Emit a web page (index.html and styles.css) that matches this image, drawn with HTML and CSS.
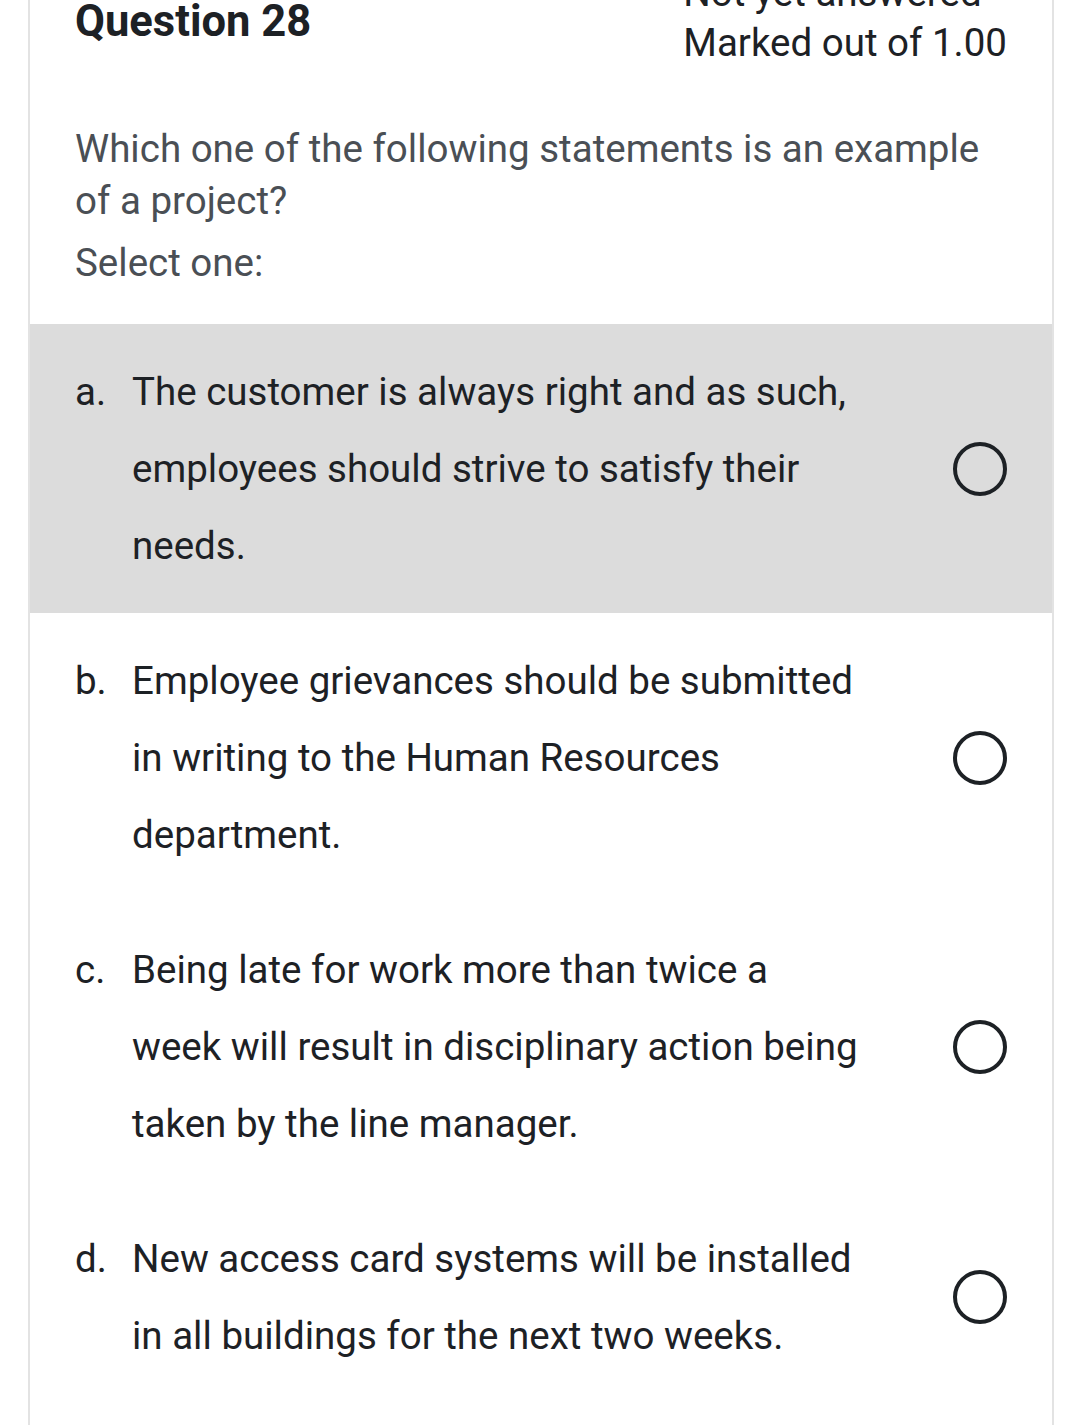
FILE: index.html
```html
<!DOCTYPE html>
<html lang="en">
<head>
<meta charset="utf-8">
<link rel="stylesheet" href="styles.css">
</head>
<body>
<div class="card">
  <div class="header">
    <h3 class="qno">Question 28</h3>
    <div class="state">
      <div>Not yet answered</div>
      <div>Marked out of 1.00</div>
    </div>
  </div>
  <div class="qtext">
    <p>Which one of the following statements is an example of a project?</p>
    <p class="prompt">Select one:</p>
  </div>
  <div class="answers">
    <div class="option hl">
      <span class="label">a.</span>
      <span class="text">The customer is always right and as such, employees should strive to satisfy their needs.</span>
      <span class="radio"></span>
    </div>
    <div class="option">
      <span class="label">b.</span>
      <span class="text">Employee grievances should be submitted in writing to the Human Resources department.</span>
      <span class="radio"></span>
    </div>
    <div class="option">
      <span class="label">c.</span>
      <span class="text">Being late for work more than twice a week will result in disciplinary action being taken by the line manager.</span>
      <span class="radio"></span>
    </div>
    <div class="option">
      <span class="label">d.</span>
      <span class="text">New access card systems will be installed in all buildings for the next two weeks.</span>
      <span class="radio"></span>
    </div>
  </div>
</div>
</body>
</html>
```

FILE: styles.css
```css
* { box-sizing: border-box; }
body {
  margin: 0;
  background: #ffffff;
  font-family: Roboto, "Liberation Sans", sans-serif;
  color: #1d2125;
}
.card {
  margin: -32px 26px 0 28px;
  border-left: 2px solid #e3e3e3;
  border-right: 2px solid #e3e3e3;
  padding-bottom: 60px;
}
.header {
  display: flex;
  justify-content: space-between;
  align-items: flex-start;
  padding: 0 45px;
}
.qno {
  margin: 0;
  padding-top: 30px;
  font-size: 43.5px;
  line-height: 48px;
  font-weight: 700;
}
.state {
  font-size: 38.5px;
  line-height: 50px;
}
.qtext {
  padding: 55px 45px 35px;
  color: #4a4f55;
  font-size: 38.5px;
}
.qtext p {
  margin: 0;
  line-height: 52px;
}
.qtext .prompt {
  margin-top: 10px;
}
.option {
  display: flex;
  align-items: center;
  padding: 29px 45px;
  font-size: 38.5px;
}
.option.hl {
  background: #dcdcdc;
}
.label {
  width: 57px;
  flex: none;
  align-self: flex-start;
  line-height: 77px;
}
.text {
  width: 730px;
  flex: none;
  line-height: 77px;
}
.radio {
  margin-left: auto;
  width: 54px;
  height: 54px;
  border: 4.5px solid #1d2125;
  border-radius: 50%;
  flex: none;
}
```
